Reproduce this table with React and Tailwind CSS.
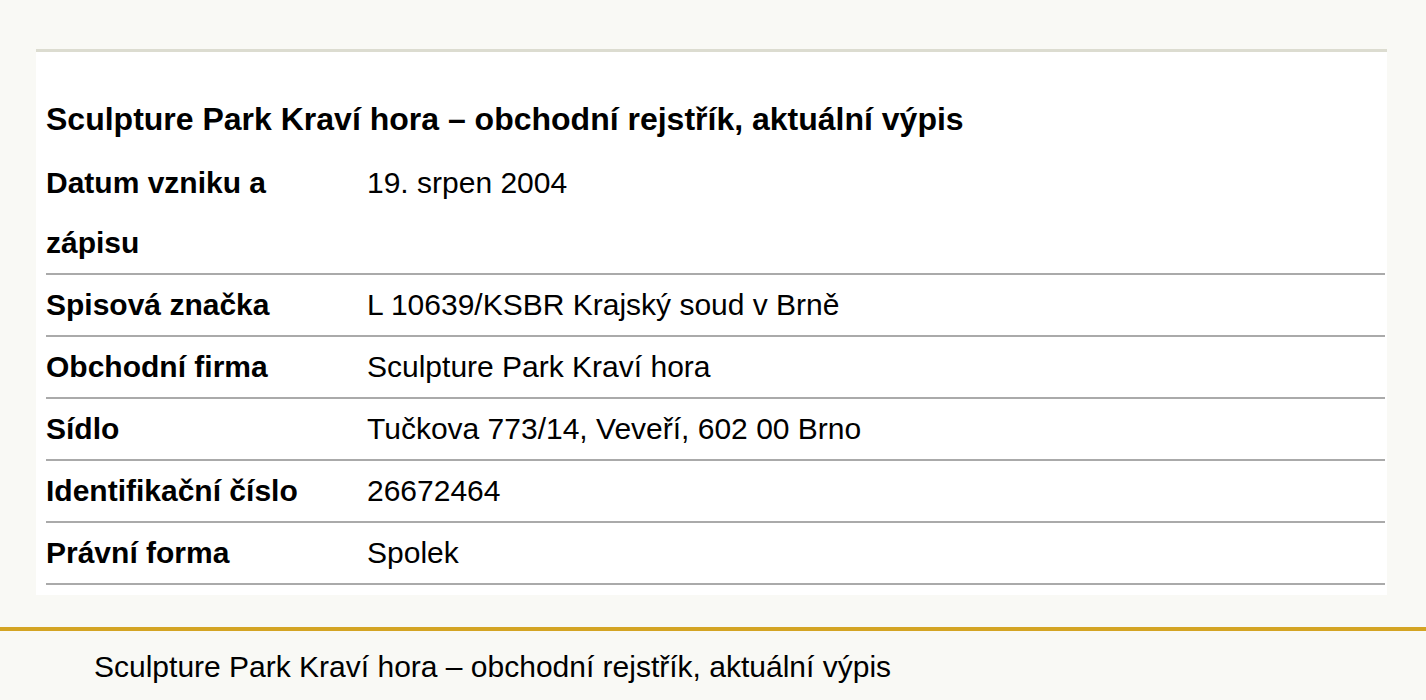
import React from 'react';

const rows = [
  ['Datum vzniku a zápisu', '19. srpen 2004'],
  ['Spisová značka', 'L 10639/KSBR Krajský soud v Brně'],
  ['Obchodní firma', 'Sculpture Park Kraví hora'],
  ['Sídlo', 'Tučkova 773/14, Veveří, 602 00 Brno'],
  ['Identifikační číslo', '26672464'],
  ['Právní forma', 'Spolek'],
];

export default function App() {
  return (
    <div className="min-h-screen bg-[#f9f9f5] text-black font-['Liberation_Sans',Arial,sans-serif]">
      <div className="pt-[49px] pl-[36px] pr-[39px]">
        {/* Record card */}
        <div className="bg-white border-t-[3px] border-[#dcdcd0] pl-[10px] pr-[2px] pb-[10px]">
          <h2 className="pt-[37px] pb-[4px] text-[32px] leading-[60px] font-bold">
            Sculpture Park Kraví hora – obchodní rejstřík, aktuální výpis
          </h2>
          <div>
            {rows.map(([label, value]) => (
              <div key={label} className="flex border-b-2 border-[#aaaaaa] text-[30px] leading-[60px]">
                <div className="w-[321px] shrink-0 pr-[40px] font-bold">{label}</div>
                <div>{value}</div>
              </div>
            ))}
          </div>
        </div>
      </div>

      {/* Footer */}
      <div className="mt-[32px] border-t-4 border-[#d4a423] pl-[94px] pt-[18px] text-[30px] leading-[36px]">
        Sculpture Park Kraví hora – obchodní rejstřík, aktuální výpis
      </div>
    </div>
  );
}
